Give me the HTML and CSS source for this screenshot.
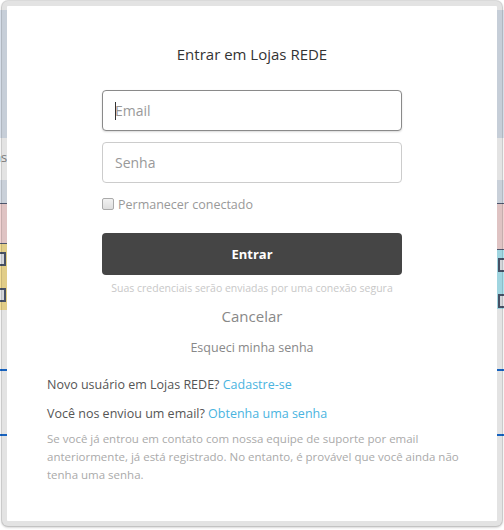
FILE: index.html
```html
<!DOCTYPE html>
<html lang="pt-BR">

<head>
    <meta charset="UTF-8">
    <meta name="viewport" content="width=device-width, initial-scale=1.0">
    <title>Entrar em Lojas REDE</title>
    <link rel="stylesheet" href="styles.css">
</head>

<body>

    <!-- Página por trás do modal -->
    <div class="page">
        <div class="page-top"></div>
        <div class="page-header"></div>
        <div class="page-title"><span class="crumb">Lojas</span></div>
        <div class="page-band"></div>
        <div class="page-rows">
            <div class="side">
                <div class="row-pink short"></div>
                <div class="row-yellow">
                    <span class="mini-box"></span>
                    <span class="mini-box"></span>
                </div>
            </div>
            <div class="side side-right">
                <div class="row-pink"></div>
                <div class="row-cyan">
                    <span class="mini-box"></span>
                    <span class="mini-box"></span>
                </div>
            </div>
        </div>
        <div class="page-gap"></div>
        <div class="page-line"></div>
        <div class="page-gap small"></div>
        <div class="page-line"></div>
    </div>

    <!-- Modal de login -->
    <div class="modal">
        <div class="modal-body">
            <h2 class="modal-title">Entrar em Lojas REDE</h2>
            <form class="login-form">
                <div class="field-wrap">
                    <input type="text" class="field focused" placeholder="Email">
                    <span class="caret"></span>
                </div>
                <input type="password" class="field" placeholder="Senha">
                <label class="remember"><input type="checkbox"> Permanecer conectado</label>
                <button type="button" class="btn-login">Entrar</button>
                <p class="secure-note">Suas credenciais serão enviadas por uma conexão segura</p>
            </form>
            <a href="#" class="cancel">Cancelar</a>
            <a href="#" class="forgot">Esqueci minha senha</a>

            <div class="extra">
                <p class="extra-line">Novo usuário em Lojas REDE? <a href="#" class="link">Cadastre-se</a></p>
                <p class="extra-line">Você nos enviou um email? <a href="#" class="link">Obtenha uma senha</a></p>
                <p class="extra-note">Se você já entrou em contato com nossa equipe de suporte por email
                    anteriormente, já está registrado. No entanto, é provável que você ainda não tenha uma senha.</p>
            </div>
        </div>
    </div>

</body>

</html>
```

FILE: styles.css
```css
* {
    box-sizing: border-box;
}

body {
    font-family: "Open Sans", "Noto Sans", sans-serif;
    background-color: #ffffff;
    margin: 0;
    overflow: hidden;
    height: 530px;
}

/* página de fundo */
.page-top {
    height: 10px;
}

.page-header {
    height: 128px;
    background-color: #dfe8f3;
}

.page-title {
    height: 42px;
    font-size: 13px;
    color: #888;
    padding-top: 10px;
    white-space: nowrap;
}

.crumb {
    display: inline-block;
    margin-left: -24px;
}

.page-band {
    height: 24px;
    background-color: #e2eaf4;
    border-bottom: 1px solid #56607a;
}

.page-rows {
    display: flex;
    justify-content: space-between;
}

.side {
    width: 20px;
}

.row-pink {
    height: 46px;
    background-color: #fbdcdc;
    border-bottom: 1px solid #56607a;
}

.row-pink.short {
    height: 40px;
}

.row-yellow {
    height: 66px;
    background-color: #fde799;
    padding-top: 8px;
}

.row-cyan {
    height: 59px;
    background-color: #b4f0fc;
    padding-top: 8px;
}

.mini-box {
    display: block;
    width: 26px;
    height: 14px;
    border: 2px solid #4f5a72;
    background-color: #eef0f4;
    margin-bottom: 22px;
    margin-left: 14px;
}

.side:first-child .mini-box {
    margin-left: -20px;
}

.page-gap {
    height: 59px;
}

.page-gap.small {
    height: 63px;
}

.page-line {
    height: 2px;
    background-color: #1a6fd6;
}

/* modal */
.modal {
    position: absolute;
    top: 0;
    left: 1px;
    width: 502px;
    height: 527px;
    border: 6px solid rgba(0, 0, 0, 0.11);
    border-radius: 7px;
    background-color: #fff;
    background-clip: padding-box;
    box-shadow: 0 1px 2px rgba(0, 0, 0, 0.15);
}

.modal-body {
    display: flex;
    flex-direction: column;
    align-items: center;
    padding-top: 37px;
}

.modal-title {
    margin: 0;
    font-size: 15px;
    font-weight: normal;
    line-height: 22px;
    color: #333;
}

.login-form {
    width: 300px;
    display: flex;
    flex-direction: column;
    margin-top: 25px;
}

.field-wrap {
    position: relative;
}

.caret {
    position: absolute;
    left: 13px;
    top: 12px;
    width: 1px;
    height: 18px;
    background-color: #333;
}

.field {
    width: 100%;
    height: 41px;
    padding: 0 12px;
    border: 1px solid #ccc;
    border-radius: 4px;
    font-family: inherit;
    font-size: 14px;
    color: #333;
    outline: none;
    margin-bottom: 11px;
}

.field::placeholder {
    color: #999;
}

.field.focused,
.field:focus {
    border-color: #8a8a8a;
    box-shadow: 0 1px 2px rgba(0, 0, 0, 0.15);
}

.remember {
    display: flex;
    align-items: center;
    font-size: 12.5px;
    color: #999;
    height: 20px;
}

.remember input {
    -webkit-appearance: none;
    appearance: none;
    width: 12px;
    height: 12px;
    margin: 0 4px 0 0;
    border: 1px solid #aaa;
    border-radius: 2px;
    background: linear-gradient(#f2f2f2, #dedede);
}

.btn-login {
    width: 100%;
    height: 42px;
    margin-top: 19px;
    background-color: #454545;
    color: white;
    font-family: inherit;
    font-size: 13px;
    font-weight: bold;
    border: none;
    border-radius: 4px;
    cursor: pointer;
}

.secure-note {
    margin: 5px 0 0;
    text-align: center;
    font-size: 10.5px;
    line-height: 16px;
    color: #c8c8c8;
}

.cancel {
    margin-top: 9px;
    font-size: 15px;
    line-height: 22px;
    color: #888;
    text-decoration: none;
}

.forgot {
    margin-top: 12px;
    font-size: 12.5px;
    line-height: 18px;
    color: #888;
    text-decoration: none;
}

.extra {
    align-self: stretch;
    padding: 0 20px 0 40px;
    margin-top: 19px;
}

.extra-line {
    margin: 0 0 11px;
    font-size: 12.5px;
    line-height: 18px;
    color: #555;
}

.link {
    color: #4ab4df;
    text-decoration: none;
}

.extra-note {
    margin: -4px 0 0;
    font-size: 11.5px;
    line-height: 18px;
    color: #aaa;
}
```
